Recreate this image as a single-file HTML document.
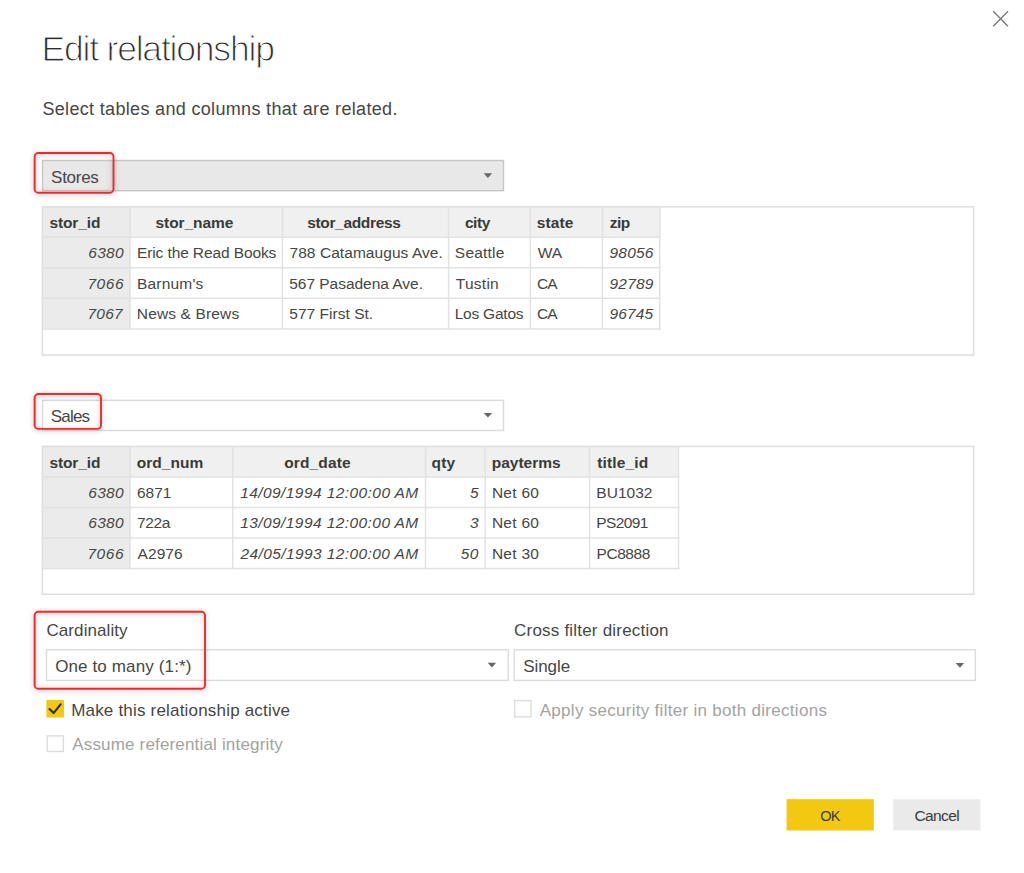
<!DOCTYPE html>
<html><head><meta charset="utf-8"><title>Edit relationship</title>
<style>
html,body{margin:0;padding:0;background:#fff;}
body{width:1024px;height:873px;position:relative;overflow:hidden;font-family:"Liberation Sans",sans-serif;color:#3c3c3c;}
svg.bg{position:absolute;left:0;top:0;}
svg.fg{position:absolute;left:0;top:0;filter:drop-shadow(0.5px 1.5px 2.5px rgba(0,0,0,.30));}
.t{position:absolute;white-space:nowrap;line-height:1;}
.lt{-webkit-text-stroke:1.1px #fff;}
</style></head><body>
<svg class="bg" width="1024" height="873" viewBox="0 0 1024 873">
<rect x="42.5" y="160.5" width="461.0" height="30.2" fill="#e8e8e8" stroke="#c6c6c6" stroke-width="1.4"/>
<path d="M483.7 173.3 L492.1 173.3 L487.9 178.0 Z" fill="#666"/>
<rect x="42.5" y="400.3" width="461.0" height="30.2" fill="#fff" stroke="#dadada" stroke-width="1.4"/>
<path d="M483.7 412.9 L492.1 412.9 L487.9 417.6 Z" fill="#666"/>
<rect x="46.5" y="649.7" width="461.7" height="30.7" fill="#fff" stroke="#dcdcdc" stroke-width="1.4"/>
<path d="M487.7 662.7 L496.1 662.7 L491.9 667.4 Z" fill="#666"/>
<rect x="514.2" y="649.7" width="461.2" height="30.7" fill="#fff" stroke="#dcdcdc" stroke-width="1.4"/>
<path d="M955.7 663.0 L964.1 663.0 L959.9 667.7 Z" fill="#666"/>
<rect x="42.4" y="206.8" width="617.4" height="30.5" fill="#f0f0f0"/>
<rect x="42.4" y="206.8" width="87.7" height="122.1" fill="#ebebeb"/>
<line x1="42.4" y1="237.3" x2="660.55" y2="237.3" stroke="#e2e2e2" stroke-width="1.5"/>
<line x1="42.4" y1="267.8" x2="660.55" y2="267.8" stroke="#e2e2e2" stroke-width="1.5"/>
<line x1="42.4" y1="298.3" x2="660.55" y2="298.3" stroke="#e2e2e2" stroke-width="1.5"/>
<line x1="42.4" y1="328.9" x2="660.55" y2="328.9" stroke="#e2e2e2" stroke-width="1.5"/>
<line x1="130.1" y1="206.8" x2="130.1" y2="329.65" stroke="#e2e2e2" stroke-width="1.5"/>
<line x1="282.4" y1="206.8" x2="282.4" y2="329.65" stroke="#e2e2e2" stroke-width="1.5"/>
<line x1="448.6" y1="206.8" x2="448.6" y2="329.65" stroke="#e2e2e2" stroke-width="1.5"/>
<line x1="530.3" y1="206.8" x2="530.3" y2="329.65" stroke="#e2e2e2" stroke-width="1.5"/>
<line x1="602.4" y1="206.8" x2="602.4" y2="329.65" stroke="#e2e2e2" stroke-width="1.5"/>
<line x1="659.8" y1="206.8" x2="659.8" y2="329.65" stroke="#e2e2e2" stroke-width="1.5"/>
<rect x="42.4" y="206.8" width="931.2" height="148.3" fill="none" stroke="#e0e0e0" stroke-width="1.6"/>
<rect x="42.4" y="446.4" width="636.1" height="30.6" fill="#f0f0f0"/>
<rect x="42.4" y="446.4" width="87.7" height="122.2" fill="#ebebeb"/>
<line x1="42.4" y1="477.0" x2="679.25" y2="477.0" stroke="#e2e2e2" stroke-width="1.5"/>
<line x1="42.4" y1="507.5" x2="679.25" y2="507.5" stroke="#e2e2e2" stroke-width="1.5"/>
<line x1="42.4" y1="538.1" x2="679.25" y2="538.1" stroke="#e2e2e2" stroke-width="1.5"/>
<line x1="42.4" y1="568.6" x2="679.25" y2="568.6" stroke="#e2e2e2" stroke-width="1.5"/>
<line x1="130.1" y1="446.4" x2="130.1" y2="569.35" stroke="#e2e2e2" stroke-width="1.5"/>
<line x1="232.8" y1="446.4" x2="232.8" y2="569.35" stroke="#e2e2e2" stroke-width="1.5"/>
<line x1="425.5" y1="446.4" x2="425.5" y2="569.35" stroke="#e2e2e2" stroke-width="1.5"/>
<line x1="485.2" y1="446.4" x2="485.2" y2="569.35" stroke="#e2e2e2" stroke-width="1.5"/>
<line x1="589.6" y1="446.4" x2="589.6" y2="569.35" stroke="#e2e2e2" stroke-width="1.5"/>
<line x1="678.5" y1="446.4" x2="678.5" y2="569.35" stroke="#e2e2e2" stroke-width="1.5"/>
<rect x="42.4" y="446.4" width="931.2" height="147.9" fill="none" stroke="#e0e0e0" stroke-width="1.6"/>
<rect x="46.4" y="699.9" width="17.6" height="17.6" fill="#f2c811"/>
<path d="M49.5 709.0 L53.6 713.1 L60.6 704.3" stroke="#2d2d2d" stroke-width="2.1" stroke-linecap="round" stroke-linejoin="round" fill="none"/>
<rect x="47.1" y="735.9" width="16.3" height="15.6" fill="#fff" stroke="#dcdcdc" stroke-width="1.4"/>
<rect x="514.7" y="700.6" width="16.3" height="16.3" fill="#fff" stroke="#dcdcdc" stroke-width="1.4"/>
<rect x="786.6" y="799.2" width="87.2" height="31.3" fill="#f2c811"/>
<rect x="893.2" y="799.2" width="87.2" height="31.3" fill="#eaeaea"/>
<path d="M993.2 11.3 L1008 26.2 M1008 11.3 L993.2 26.2" stroke="#777" stroke-width="1.3" fill="none"/>
</svg>
<div class="t lt" style="left:41.49px;top:31.75px;font-size:35.5px;letter-spacing:-1.2px;color:#2e2e2e;">Edit relationship</div>
<div class="t" style="left:42.38px;top:100.36px;font-size:18px;letter-spacing:0.33px;color:#464646;">Select tables and columns that are related.</div>
<div class="t" style="left:51.08px;top:168.71px;font-size:17px;letter-spacing:-0.27px;color:#464646;">Stores</div>
<div class="t" style="left:50.81px;top:408.21px;font-size:17px;letter-spacing:-0.83px;color:#464646;">Sales</div>
<div class="t" style="left:46.47px;top:621.81px;font-size:17px;letter-spacing:0.08px;color:#464646;">Cardinality</div>
<div class="t" style="left:55.15px;top:657.91px;font-size:17px;letter-spacing:0.13px;color:#464646;">One to many (1:*)</div>
<div class="t" style="left:514.09px;top:621.81px;font-size:17px;letter-spacing:0.2px;color:#464646;">Cross filter direction</div>
<div class="t" style="left:523.15px;top:657.91px;font-size:17px;letter-spacing:-0.04px;color:#464646;">Single</div>
<div class="t" style="left:71.19px;top:701.91px;font-size:17px;letter-spacing:0.19px;color:#464646;">Make this relationship active</div>
<div class="t" style="left:72.24px;top:736.41px;font-size:17px;letter-spacing:0.17px;color:#a3a3a3;">Assume referential integrity</div>
<div class="t" style="left:539.71px;top:701.91px;font-size:17px;letter-spacing:0.29px;color:#a3a3a3;">Apply security filter in both directions</div>
<div class="t" style="left:820.18px;top:809.13px;font-size:14.5px;letter-spacing:-0.67px;color:#3a3a3a;">OK</div>
<div class="t" style="left:914.42px;top:808.28px;font-size:15.5px;letter-spacing:-0.6px;color:#3a3a3a;">Cancel</div>
<div class="t" style="left:49.48px;top:214.88px;font-size:15.5px;letter-spacing:-0.13px;font-weight:bold;color:#3a3a3a;">stor_id</div>
<div class="t" style="left:155.47px;top:214.88px;font-size:15.5px;letter-spacing:-0.05px;font-weight:bold;color:#3a3a3a;">stor_name</div>
<div class="t" style="left:307.13px;top:214.88px;font-size:15.5px;letter-spacing:-0.33px;font-weight:bold;color:#3a3a3a;">stor_address</div>
<div class="t" style="left:464.88px;top:214.88px;font-size:15.5px;letter-spacing:-0.4px;font-weight:bold;color:#3a3a3a;">city</div>
<div class="t" style="left:536.66px;top:214.88px;font-size:15.5px;letter-spacing:0.13px;font-weight:bold;color:#3a3a3a;">state</div>
<div class="t" style="left:609.68px;top:214.88px;font-size:15.5px;letter-spacing:-0.45px;font-weight:bold;color:#3a3a3a;">zip</div>
<div class="t" style="left:88.29px;top:245.48px;font-size:15.5px;letter-spacing:0.29px;font-style:italic;color:#464646;">6380</div>
<div class="t" style="left:136.99px;top:245.48px;font-size:15.5px;letter-spacing:-0.11px;color:#464646;">Eric the Read Books</div>
<div class="t" style="left:289.5px;top:245.48px;font-size:15.5px;letter-spacing:0.06px;color:#464646;">788 Catamaugus Ave.</div>
<div class="t" style="left:454.86px;top:245.48px;font-size:15.5px;letter-spacing:0.21px;color:#464646;">Seattle</div>
<div class="t" style="left:537.8px;top:245.48px;font-size:15.5px;letter-spacing:-0.04px;color:#464646;">WA</div>
<div class="t" style="left:609.55px;top:245.48px;font-size:15.5px;letter-spacing:0.18px;font-style:italic;color:#464646;">98056</div>
<div class="t" style="left:87.38px;top:275.98px;font-size:15.5px;letter-spacing:0.6px;font-style:italic;color:#464646;">7066</div>
<div class="t" style="left:137.04px;top:275.98px;font-size:15.5px;letter-spacing:0.19px;color:#464646;">Barnum's</div>
<div class="t" style="left:289.25px;top:275.98px;font-size:15.5px;letter-spacing:-0.03px;color:#464646;">567 Pasadena Ave.</div>
<div class="t" style="left:455.79px;top:275.98px;font-size:15.5px;letter-spacing:0.26px;color:#464646;">Tustin</div>
<div class="t" style="left:537.03px;top:275.98px;font-size:15.5px;letter-spacing:-0.9px;color:#464646;">CA</div>
<div class="t" style="left:609.56px;top:275.98px;font-size:15.5px;letter-spacing:0.17px;font-style:italic;color:#464646;">92789</div>
<div class="t" style="left:87.4px;top:306.48px;font-size:15.5px;letter-spacing:0.28px;font-style:italic;color:#464646;">7067</div>
<div class="t" style="left:136.84px;top:306.48px;font-size:15.5px;letter-spacing:0.14px;color:#464646;">News &amp; Brews</div>
<div class="t" style="left:289.25px;top:306.48px;font-size:15.5px;letter-spacing:0.03px;color:#464646;">577 First St.</div>
<div class="t" style="left:454.65px;top:306.48px;font-size:15.5px;letter-spacing:-0.21px;color:#464646;">Los Gatos</div>
<div class="t" style="left:537.03px;top:306.48px;font-size:15.5px;letter-spacing:-0.9px;color:#464646;">CA</div>
<div class="t" style="left:609.56px;top:306.48px;font-size:15.5px;letter-spacing:0.13px;font-style:italic;color:#464646;">96745</div>
<div class="t" style="left:49.48px;top:454.58px;font-size:15.5px;letter-spacing:-0.13px;font-weight:bold;color:#3a3a3a;">stor_id</div>
<div class="t" style="left:136.83px;top:454.58px;font-size:15.5px;letter-spacing:0.01px;font-weight:bold;color:#3a3a3a;">ord_num</div>
<div class="t" style="left:284.29px;top:454.58px;font-size:15.5px;letter-spacing:0.12px;font-weight:bold;color:#3a3a3a;">ord_date</div>
<div class="t" style="left:431.57px;top:454.58px;font-size:15.5px;letter-spacing:0.14px;font-weight:bold;color:#3a3a3a;">qty</div>
<div class="t" style="left:491.68px;top:454.58px;font-size:15.5px;letter-spacing:0.01px;font-weight:bold;color:#3a3a3a;">payterms</div>
<div class="t" style="left:597.32px;top:454.58px;font-size:15.5px;letter-spacing:0.14px;font-weight:bold;color:#3a3a3a;">title_id</div>
<div class="t" style="left:88.29px;top:484.98px;font-size:15.5px;letter-spacing:0.29px;font-style:italic;color:#464646;">6380</div>
<div class="t" style="left:136.9px;top:484.98px;font-size:15.5px;letter-spacing:0.03px;color:#464646;">6871</div>
<div class="t" style="left:240.23px;top:484.98px;font-size:15.5px;letter-spacing:0.42px;font-style:italic;color:#464646;">14/09/1994 12:00:00 AM</div>
<div class="t" style="left:469.98px;top:484.98px;font-size:15.5px;font-style:italic;color:#464646;">5</div>
<div class="t" style="left:491.9px;top:484.98px;font-size:15.5px;letter-spacing:0.27px;color:#464646;">Net 60</div>
<div class="t" style="left:596.32px;top:484.98px;font-size:15.5px;letter-spacing:0.02px;color:#464646;">BU1032</div>
<div class="t" style="left:88.29px;top:515.48px;font-size:15.5px;letter-spacing:0.29px;font-style:italic;color:#464646;">6380</div>
<div class="t" style="left:137.06px;top:515.48px;font-size:15.5px;letter-spacing:-0.42px;color:#464646;">722a</div>
<div class="t" style="left:240.23px;top:515.48px;font-size:15.5px;letter-spacing:0.42px;font-style:italic;color:#464646;">13/09/1994 12:00:00 AM</div>
<div class="t" style="left:470.05px;top:515.48px;font-size:15.5px;font-style:italic;color:#464646;">3</div>
<div class="t" style="left:491.9px;top:515.48px;font-size:15.5px;letter-spacing:0.27px;color:#464646;">Net 60</div>
<div class="t" style="left:596.26px;top:515.48px;font-size:15.5px;letter-spacing:-0.6px;color:#464646;">PS2091</div>
<div class="t" style="left:87.38px;top:545.98px;font-size:15.5px;letter-spacing:0.6px;font-style:italic;color:#464646;">7066</div>
<div class="t" style="left:137.54px;top:545.98px;font-size:15.5px;letter-spacing:0.07px;color:#464646;">A2976</div>
<div class="t" style="left:240.52px;top:545.98px;font-size:15.5px;letter-spacing:0.4px;font-style:italic;color:#464646;">24/05/1993 12:00:00 AM</div>
<div class="t" style="left:460.86px;top:545.98px;font-size:15.5px;letter-spacing:0.28px;font-style:italic;color:#464646;">50</div>
<div class="t" style="left:491.9px;top:545.98px;font-size:15.5px;letter-spacing:0.27px;color:#464646;">Net 30</div>
<div class="t" style="left:596.48px;top:545.98px;font-size:15.5px;letter-spacing:-0.43px;color:#464646;">PC8888</div>
<svg class="fg" width="1024" height="873" viewBox="0 0 1024 873">
<rect x="34.6" y="153.0" width="78.9" height="39.7" rx="3.8" ry="3.8" fill="none" stroke="#fa2626" stroke-width="1.9"/>
<rect x="34.6" y="394.0" width="66.4" height="34.9" rx="3.8" ry="3.8" fill="none" stroke="#fa2626" stroke-width="1.9"/>
<rect x="34.6" y="611.8" width="170.4" height="77.0" rx="3.8" ry="3.8" fill="none" stroke="#fa2626" stroke-width="1.9"/>
</svg>
</body></html>
